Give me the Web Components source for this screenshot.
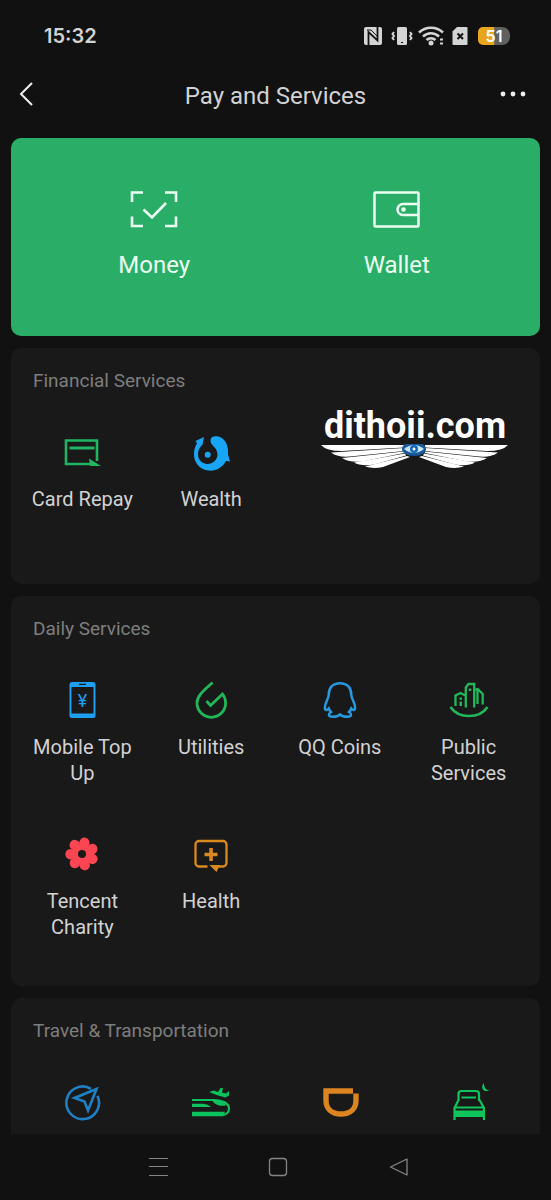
<!DOCTYPE html>
<html lang="en">
<head>
<meta charset="utf-8">
<meta name="viewport" content="width=device-width, initial-scale=1">
<title>Pay and Services</title>
<style>
  body {
    margin: 0;
    background: #111;
    color: #d2d2d2;
    font-family: Roboto, "Liberation Sans", sans-serif;
    font-size: 20px;
    line-height: 26px;
  }
</style>
</head>
<body>
<pay-app></pay-app>

<script>
const petals = [25, 76, 128, 179, 231, 282, 334]
  .map((angle) => `<circle cx="31.500" cy="19" r="5.200" transform="rotate(${angle} 20 19)"/>`)
  .join('');

const icons = {
  back: '<path d="M25 7 14 18l11 11" fill="none" stroke="currentColor" stroke-width="2"/>',
  more: '<circle cx="10" cy="18" r="2.4"/><circle cx="20" cy="18" r="2.4"/><circle cx="30" cy="18" r="2.4"/>',
  nfc: '<rect x="11" y="11" width="18" height="18" rx="2"/><path d="M15.500 29V16l9 8.500V11" fill="none" stroke="#111" stroke-width="1.800"/><path d="M14 14h4l7 7" fill="none" stroke="#111"/>',
  vibrate: '<rect x="15" y="11" width="10" height="18" rx="1.5"/><path d="M19 26.500h2" stroke="#111"/><path d="M12 16l-1.500 2 1.500 2-1.500 2 1.500 2M28 16l1.500 2-1.500 2 1.500 2-1.500 2" fill="none" stroke="currentColor" stroke-width="2"/>',
  wifi: '<g fill="none" stroke="currentColor" stroke-width="2.500"><path d="M8 16.500c6.500-6.500 17.500-6.500 24 0M12 20.500c4.500-4.500 11.500-4.500 16 0M15.500 24c2.500-2.500 6.500-2.500 9 0"/></g><circle cx="20" cy="27" r="2.500"/><path d="M29 22.500h3v2h-3zM29 26.500h3v2h-3z"/>',
  sim: '<path d="M12.500 15.500 17 11h9.500a1 1 0 0 1 1 1v16a1 1 0 0 1-1 1h-13a1 1 0 0 1-1-1z"/><path d="m17.500 17.500 5.500 5.500m0-5.500-5.500 5.500" stroke="#111" stroke-width="2"/>',
  money: '<path d="M5 13V3.500h11M38 3.500h11V13M49 27.500V37H38M16 37H5v-9.500M16.500 20.500l8.500 8 14-14.500" fill="none" stroke="currentColor" stroke-width="2.600"/>',
  wallet: '<g fill="none" stroke="currentColor" stroke-width="2.500"><rect x="4.500" y="3.500" width="44" height="34" rx="1"/><path d="M48.500 15H33a5.500 5.500 0 0 0 0 11h15.500"/></g><circle cx="33.500" cy="20.500" r="2.300"/>',
  card: '<path d="M35 28V7.500H4V31h26" fill="none" stroke="currentColor" stroke-width="2.600"/><path d="M7.500 13.500h25v3h-25z"/><path d="M27 25.500 39 33H28z"/>',
  wealth: '<path d="M19.500 7c0-3.500 4-4.500 8-3.500 7 2 10.500 10 9.500 18l2 7-4-.5C31.500 34.500 25 38.500 17 37.500 8 36 2.500 29 3 20c.2-4 1.300-7 3-9.500L4.500 8 13 4l-1.500 7.500C8 15 7 18 7 21.500 7 27 11.500 31 16.500 31s10-4 10-9.500c0-5-3.500-7.500-5.500-10-1.200-1.500-1.500-3-1.500-4.500z"/><circle cx="16.700" cy="21.700" r="3"/>',
  mobile: '<path fill-rule="evenodd" d="M10 1h21a2.500 2.500 0 0 1 2.500 2.500v31A2.500 2.500 0 0 1 31 37H10a2.500 2.500 0 0 1-2.500-2.500v-31A2.500 2.500 0 0 1 10 1zm-.5 5v26.500h22V6zM17 2.800v1.200h7V2.800z"/><text x="20.500" y="26" text-anchor="middle" font-size="18">¥</text>',
  drop: '<path d="M21.500 1.500C14 8.500 6 14 6 22a14.300 14.300 0 0 0 28.600 0c0-3.500-1.200-6.500-3.100-9L19.500 24.500l-4-4.500" fill="none" stroke="currentColor" stroke-width="2.800"/>',
  qq: '<path d="M20 2.200c-7.500 0-11.200 5-11.200 11C8.800 18 4 23 5 28c.5 1.800 2.200 1.200 3.700-.5.500 1.500 1.300 2.500 2.300 3.500-3 2-3 4.700 1.500 4.700 3.500 0 6-.7 7.500-2.200 1.500 1.500 4 2.200 7.500 2.200 4.500 0 4.500-2.700 1.500-4.700 1-1 1.800-2 2.300-3.500 1.500 1.700 3.200 2.300 3.700.5 1-5-3.800-10-3.800-14.800 0-6-3.700-11-11.200-11z" fill="none" stroke="currentColor" stroke-width="2.500"/>',
  city: '<g fill="none" stroke="currentColor" stroke-width="2.300"><path d="M16.800 26.500V6.500l2.700-3.500h5.700v23.500M25.200 9l3.500-1 5 5v10.500M28.500 8v15M6.500 25V14.500l5-2.500 5 2.500"/><path d="M1.500 26c8 12 29 12 37 0" stroke-width="2.600"/></g><path d="M19.800 7.500h2.500V10h-2.500zM10.500 16.500H13v2.300h-2.500zM10.500 20.500H13V25h-2.500z"/>',
  flower: `${petals}<circle cx="20" cy="19" r="10"/><circle cx="20" cy="19" r="4" fill="#191919"/>`,
  health: '<path d="M16.500 31.500H8a3.500 3.500 0 0 1-3.500-3.500V9.500A3.500 3.500 0 0 1 8 6h24a3.500 3.500 0 0 1 3.500 3.500V28a3.500 3.500 0 0 1-3.500 3.500h-4" fill="none" stroke="currentColor" stroke-width="2.300"/><path d="M18.500 30H29l-3.500 7zM18.300 13h3.500v4.800h4.700v3.500h-4.700V26h-3.500v-4.700h-4.800v-3.500h4.800z"/>',
  compass: '<g fill="none" stroke="currentColor" stroke-width="2.600"><path d="M29 5.800A16.300 16.300 0 1 0 35.500 13"/><path d="M34.500 6 12.500 15l10 3.500 3.500 9z"/></g>',
  train: '<path d="M1 17h22c9 0 15 4 15 8.500 0 4-3 6.500-7 6.500" fill="none" stroke="currentColor" stroke-width="2.200"/><path d="M1 28.700h33l-2 4.500H1zM1 20.700h11q5 .5 8 3.300H1zM21 17h8c3 1 5 3 6 5.500-6 1-12-1-14-5.500zM18 9l5-1.500L27 9l2.500-4H32l-1 4.500 4 1 3-2.500v4.500l-3.500 2-7.500-2z"/>',
  bowl: '<path d="M33 8H6v9.500C6 26 12 31 21 31s15-5 15-13.500v-7" fill="none" stroke="currentColor" stroke-width="5.400"/>',
  hotel: '<g fill="none" stroke="currentColor" stroke-width="2.200"><path d="M9.500 18v-7q0-3 3-3H27q3 0 3 3v7M12.500 14.500H27M9.500 17 5.500 25v12M30.500 17l4.500 8v12M5 24.500h30"/></g><path d="M5 27.500h30V34H5zM35 0c-4 4-1 10 5 7.500-4-1-5-4-5-7.500z"/>',
  recents: '<path d="M11 11.500h19M11 19.500h19M11 28.500h19" stroke="currentColor"/>',
  home: '<rect x="11.500" y="11.500" width="17" height="17" rx="3" fill="none" stroke="currentColor" stroke-width="1.300"/>',
  previous: '<path d="M28 12v16L11.500 20z" fill="none" stroke="currentColor" stroke-width="1.300" stroke-linejoin="round"/>'
};

class PayIcon extends HTMLElement {
  connectedCallback() {
    const name = this.getAttribute('name');
    const width = name === 'money' || name === 'wallet' ? 54 : 40;

    this.attachShadow({ mode: 'open' }).innerHTML = `
      <style>
        :host { display: block; flex: none; }
        svg { display: block; height: 40px; fill: currentColor; }
      </style>
      <svg viewBox="0 0 ${width} 40" width="${width}" aria-hidden="true">${icons[name]}</svg>
    `;
  }
}

class StatusBar extends HTMLElement {
  connectedCallback() {
    this.attachShadow({ mode: 'open' }).innerHTML = `
      <style>
        :host {
          display: flex;
          align-items: center;
          justify-content: space-between;
          height: 48px;
          padding: 12px 41px 0 44px;
          font-family: Inter, Roboto, sans-serif;
          font-weight: 600;
        }
        .signals { display: flex; align-items: center; color: #d4d4d4; }
        .signal { display: flex; justify-content: center; width: 29px; }
        .battery {
          width: 32px;
          height: 18px;
          margin-left: 4px;
          border-radius: 5px 8px 8px 5px;
          background: linear-gradient(90deg, #e9a51c 50%, #606060 52%);
          color: #fff;
          font-size: 16px;
          line-height: 18px;
          text-align: center;
        }
      </style>
      <span>15:32</span>
      <div class="signals">
        <span class="signal"><pay-icon name="nfc"></pay-icon></span>
        <span class="signal"><pay-icon name="vibrate"></pay-icon></span>
        <span class="signal"><pay-icon name="wifi"></pay-icon></span>
        <span class="signal"><pay-icon name="sim"></pay-icon></span>
        <div class="battery">51</div>
      </div>
    `;
  }
}

class TopBar extends HTMLElement {
  connectedCallback() {
    this.attachShadow({ mode: 'open' }).innerHTML = `
      <style>
        :host {
          display: grid;
          grid-template-columns: 40px 1fr 40px;
          align-items: center;
          height: 72px;
          padding: 0 18px 0 7px;
        }
        h1 {
          margin: 0 0 0 11px;
          font-size: 24px;
          font-weight: 400;
          text-align: center;
        }
        button { padding: 0; border: 0; background: none; color: #eee; }
      </style>
      <button type="button" aria-label="Back"><pay-icon name="back"></pay-icon></button>
      <h1><slot></slot></h1>
      <button type="button" aria-label="More"><pay-icon name="more"></pay-icon></button>
    `;
  }
}

class WalletCard extends HTMLElement {
  connectedCallback() {
    this.attachShadow({ mode: 'open' }).innerHTML = `
      <style>
        :host {
          display: grid;
          grid-template-columns: 1fr 1fr;
          padding: 51px 22px 58px;
          border-radius: 10px;
          background: #2aae67;
        }
        a {
          display: flex;
          flex-direction: column;
          align-items: center;
          gap: 23px;
          color: #eafff2;
          font-size: 24px;
          text-decoration: none;
        }
      </style>
      <a href="#money"><pay-icon name="money"></pay-icon>Money</a>
      <a href="#wallet"><pay-icon name="wallet"></pay-icon>Wallet</a>
    `;
  }
}

class ServiceItem extends HTMLElement {
  connectedCallback() {
    const label = this.getAttribute('label') || this.textContent;

    this.attachShadow({ mode: 'open' }).innerHTML = `
      <style>
        :host { display: block; }
        a {
          display: flex;
          flex-direction: column;
          align-items: center;
          gap: 13px;
          color: inherit;
          text-align: center;
          text-decoration: none;
        }
        pay-icon { color: ${this.getAttribute('color')}; }
        .label { max-width: 110px; min-height: 52px; }
        :host([compact]) .label { display: none; }
      </style>
      <a href="#service" aria-label="${label}">
        <pay-icon name="${this.getAttribute('icon')}"></pay-icon>
        <span class="label"><slot></slot></span>
      </a>
    `;
  }
}

class ServiceGroup extends HTMLElement {
  connectedCallback() {
    this.attachShadow({ mode: 'open' }).innerHTML = `
      <style>
        :host {
          display: block;
          position: relative;
          padding: 20px 7px 46px;
          border-radius: 10px;
          background: #191919;
        }
        :host([last]) { padding-bottom: 11px; border-radius: 10px 10px 0 0; }
        h2 {
          margin: 0 15px 39px;
          color: #7e7e7e;
          font-size: 19px;
          font-weight: 400;
        }
        .grid {
          display: grid;
          grid-template-columns: repeat(4, 1fr);
          row-gap: 49px;
        }
      </style>
      <h2>${this.getAttribute('heading')}</h2>
      <div class="grid"><slot></slot></div>
      <slot name="mark"></slot>
    `;
  }
}

class SiteMark extends HTMLElement {
  connectedCallback() {
    this.attachShadow({ mode: 'open' }).innerHTML = `
      <style>
        :host {
          position: absolute;
          top: 60px;
          right: 30px;
          width: 190px;
          color: #fff;
          text-align: center;
          white-space: nowrap;
        }
        span {
          display: block;
          font: bold 36px/36px Roboto, sans-serif;
        }
        svg { display: block; width: 190px; height: 24px; }
      </style>
      <span>dithoii.com</span>
      <svg viewBox="0 0 190 24" aria-hidden="true">
        <g id="wing" fill="#fff">
          <path d="M1 1h83v2.500L22 7Q6 7 1 1z"/>
          <path d="M11 8.500 84 4v3L30 12.500Q17 13.500 11 8.500z"/>
          <path d="M22 14 84 7.500V9L42 17.500q-14 1-20-3.500z"/>
          <path d="M34 18.500 85 9.500l1 2L54 20.500q-13 2-20-2z"/>
          <path d="M45 22.500 87 12l3 1-27 10q-10 2-18-.5z"/>
        </g>
        <use href="#wing" transform="translate(189) scale(-1 1)"/>
        <ellipse cx="94" cy="5" rx="12" ry="7" fill="#17599b"/>
        <path d="M84 5q10-8 20 0-10 8-20 0z" fill="#c5e5fa"/>
        <circle cx="94" cy="5" r="4" fill="#1769b5"/>
        <circle cx="94" cy="5" r="1.500" fill="#fff"/>
      </svg>
    `;
  }
}

class SystemNav extends HTMLElement {
  connectedCallback() {
    this.attachShadow({ mode: 'open' }).innerHTML = `
      <style>
        :host {
          display: grid;
          grid-template-columns: repeat(3, 1fr);
          justify-items: center;
          align-items: center;
          height: 65px;
          padding: 0 92px 0 98px;
          background: #111;
        }
        button { padding: 0; border: 0; background: none; color: #858585; }
      </style>
      <button type="button" aria-label="Recent apps"><pay-icon name="recents"></pay-icon></button>
      <button type="button" aria-label="Home"><pay-icon name="home"></pay-icon></button>
      <button type="button" aria-label="Previous"><pay-icon name="previous"></pay-icon></button>
    `;
  }
}

class PayApp extends HTMLElement {
  connectedCallback() {
    this.attachShadow({ mode: 'open' }).innerHTML = `
      <style>
        :host { display: block; }
        main {
          display: flex;
          flex-direction: column;
          gap: 12px;
          padding: 6px 11px 0;
        }
      </style>
      <status-bar></status-bar>
      <top-bar>Pay and Services</top-bar>
      <main>
        <wallet-card></wallet-card>
        <service-group heading="Financial Services">
          <service-item icon="card" color="#20b562">Card Repay</service-item>
          <service-item icon="wealth" color="#18a5f5">Wealth</service-item>
          <site-mark slot="mark"></site-mark>
        </service-group>
        <service-group heading="Daily Services">
          <service-item icon="mobile" color="#1e9ff0">Mobile Top Up</service-item>
          <service-item icon="drop" color="#20b85a">Utilities</service-item>
          <service-item icon="qq" color="#2699e0">QQ Coins</service-item>
          <service-item icon="city" color="#20b85a">Public Services</service-item>
          <service-item icon="flower" color="#fa4652">Tencent Charity</service-item>
          <service-item icon="health" color="#d98a1e">Health</service-item>
        </service-group>
        <service-group heading="Travel &amp; Transportation" last>
          <service-item compact icon="compass" color="#2080c4" label="Travel"></service-item>
          <service-item compact icon="train" color="#0cc25c" label="Rail and flights"></service-item>
          <service-item compact icon="bowl" color="#dc8420" label="Ride hailing"></service-item>
          <service-item compact icon="hotel" color="#0fc65c" label="Hotels"></service-item>
        </service-group>
      </main>
      <system-nav></system-nav>
    `;
  }
}

customElements.define('pay-icon', PayIcon);
customElements.define('status-bar', StatusBar);
customElements.define('top-bar', TopBar);
customElements.define('wallet-card', WalletCard);
customElements.define('service-item', ServiceItem);
customElements.define('service-group', ServiceGroup);
customElements.define('site-mark', SiteMark);
customElements.define('system-nav', SystemNav);
customElements.define('pay-app', PayApp);
</script>
</body>
</html>
